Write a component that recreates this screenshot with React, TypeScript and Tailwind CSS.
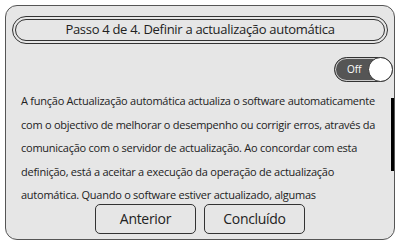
import React from "react";

export default function App() {
  const lines = [
    "A função Actualização automática actualiza o software automaticamente",
    "com o objectivo de melhorar o desempenho ou corrigir erros, através da",
    "comunicação com o servidor de actualização. Ao concordar com esta",
    "definição, está a aceitar a execução da operação de actualização",
    "automática. Quando o software estiver actualizado, algumas",
  ];
  return (
    <div className="w-[398px] h-[240px] bg-white overflow-hidden relative" style={{ fontFamily: '"Open Sans", "Noto Sans", sans-serif' }}>
      <div className="absolute left-[5px] top-[5px] w-[390px] h-[235px] rounded-[12px] border border-[#555] bg-[#e6e6e6] flex flex-col">
        <div className="mx-[6px] mt-[10px] rounded-full border-[1.5px] border-[#333] p-[2px]">
          <div className="h-[22px] rounded-full border border-[#333] flex items-center justify-center text-[13px] text-[#222] tracking-[-0.3px]">
            Passo 4 de 4. Definir a actualização automática
          </div>
        </div>
        <div className="flex justify-end pr-[1px] mt-[13px]">
          <div className="w-[59px] h-[25px] rounded-full bg-[#555] border border-[#333] ring-1 ring-inset ring-[#ccc] relative flex items-center">
            <span className="ml-[12px] text-[10px] text-white">Off</span>
            <div className="absolute right-[-1px] top-[-1px] w-[25px] h-[25px] rounded-full bg-white border border-[#333]" />
          </div>
        </div>
        <div className="flex mt-[7px]">
          <div className="pl-[15px] text-[11px] text-[#222] leading-[23.5px] tracking-[-0.25px] whitespace-nowrap flex-1">
            {lines.map((l, i) => (
              <div key={i}>{l}</div>
            ))}
          </div>
          <div className="w-[3px] h-[73px] bg-black mt-[9px]" />
        </div>
        <div className="flex justify-center gap-[8px] mt-[-3px]">
          <button className="w-[101px] h-[30px] rounded-[5px] border border-[#333] text-[14px] tracking-[-0.3px] text-[#222]">Anterior</button>
          <button className="w-[101px] h-[30px] rounded-[5px] border border-[#333] text-[14px] tracking-[-0.3px] text-[#222]">Concluído</button>
        </div>
      </div>
    </div>
  );
}
